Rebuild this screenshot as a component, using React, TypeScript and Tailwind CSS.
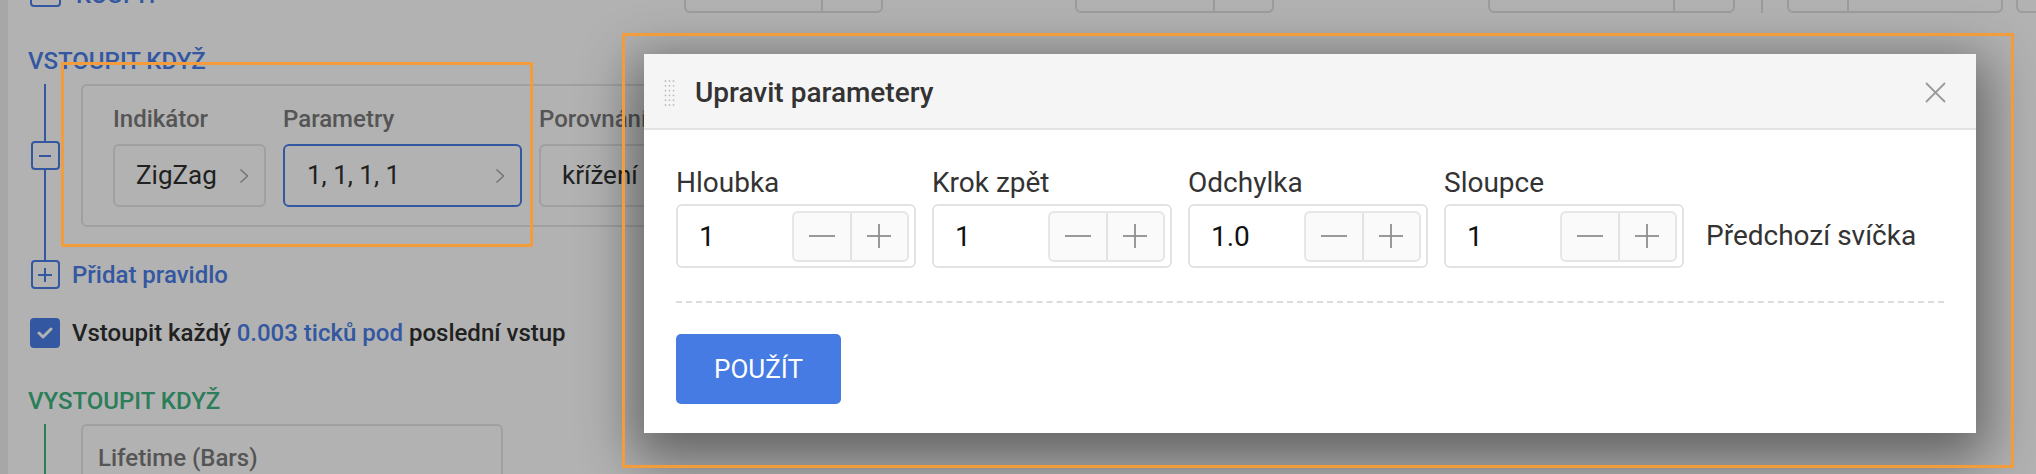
import React from "react";

function Chevron() {
  return (
    <svg width="10" height="16" viewBox="0 0 10 16" className="shrink-0">
      <polyline points="1.5,1.5 8.5,8 1.5,14.5" fill="none" stroke="#a8a8a8" strokeWidth="1.6" />
    </svg>
  );
}

function Stepper() {
  return (
    <div className="ml-auto w-[117px] h-[51px] shrink-0 border-2 border-[#e6e6e6] bg-[#fafafa] rounded-[6px] flex">
      <div className="flex-1 border-r-2 border-[#e3e3e3] flex items-center justify-center">
        <svg width="26" height="2" viewBox="0 0 26 2">
          <line x1="0" y1="1" x2="26" y2="1" stroke="#8e8e8e" strokeWidth="1.8" />
        </svg>
      </div>
      <div className="flex-1 flex items-center justify-center">
        <svg width="24" height="24" viewBox="0 0 24 24">
          <line x1="0" y1="12" x2="24" y2="12" stroke="#8e8e8e" strokeWidth="1.8" />
          <line x1="12" y1="0" x2="12" y2="24" stroke="#8e8e8e" strokeWidth="1.8" />
        </svg>
      </div>
    </div>
  );
}

function Field({ label, value }: { label: string; value: string }) {
  return (
    <div className="flex flex-col shrink-0">
      <div className="text-[28px] leading-[33px] text-[#333333]">{label}</div>
      <div className="mt-[5px] w-[240px] h-[64px] border-2 border-[#e3e3e3] rounded-[6px] flex items-center pl-[21px] pr-[5px]">
        <span className="text-[28px] leading-[33px] text-[#111111]">{value}</span>
        <Stepper />
      </div>
    </div>
  );
}

export default function App() {
  return (
    <div className="relative w-[2036px] h-[474px] overflow-hidden bg-white font-['Roboto',sans-serif]">
      {/* page behind the overlay */}
      <div className="flex h-full">
        <div className="w-[8px] h-full bg-[#f0f0f0] shrink-0" />
        <div className="flex-1 pl-[20px] flex flex-col">
          {/* top row (scrolled off) */}
          <div className="-mt-[40px] h-[53px] flex items-end shrink-0">
            <div className="ml-[2px] mb-[6px] w-[31px] h-[31px] shrink-0 border-2 border-[#4a7de6] rounded-[4px]" />
            <div className="ml-[15px] w-[120px] mb-[3px] shrink-0 text-[24px] leading-[30px] font-medium text-[#4a7de6]">KOUPIT</div>
            <div className="ml-[488px] w-[199px] h-[50px] shrink-0 border-2 border-[#e0e0e0] rounded-[6px] flex">
              <div className="w-[137px] border-r-2 border-[#e0e0e0]" />
            </div>
            <div className="ml-[192px] w-[199px] h-[50px] shrink-0 border-2 border-[#e0e0e0] rounded-[6px] flex">
              <div className="w-[138px] border-r-2 border-[#e0e0e0]" />
            </div>
            <div className="ml-[214px] w-[247px] h-[50px] shrink-0 border-2 border-[#e0e0e0] rounded-[6px] flex">
              <div className="w-[185px] border-r-2 border-[#e0e0e0]" />
            </div>
            <div className="ml-[26px] w-[2px] h-[40px] shrink-0 bg-[#e0e0e0]" />
            <div className="ml-[24px] w-[216px] h-[50px] shrink-0 border-2 border-[#e0e0e0] rounded-[6px] flex">
              <div className="w-[60px] border-r-2 border-[#e0e0e0]" />
            </div>
            <div className="ml-[13px] w-[120px] h-[50px] shrink-0 border-2 border-[#e0e0e0] rounded-[6px]" />
          </div>

          {/* VSTOUPIT KDYŽ */}
          <div className="mt-[33px] text-[24px] leading-[30px] font-medium text-[#4a7de6]">VSTOUPIT KDYŽ</div>

          <div className="mt-[8px] h-[143px] flex shrink-0">
            <div className="w-[34px] flex flex-col items-center shrink-0">
              <div className="flex-1 w-[2px] bg-[#4a7de6]" />
              <div className="w-[29px] h-[29px] border-2 border-[#4a7de6] rounded-[4px] flex items-center justify-center">
                <div className="w-[12px] h-[2px] bg-[#4a7de6]" />
              </div>
              <div className="flex-1 w-[2px] bg-[#4a7de6]" />
            </div>
            <div className="ml-[19px] w-[720px] shrink-0 border-2 border-[#e5e5e5] rounded-[6px] pt-[18px] pl-[30px] flex gap-[17px]">
              <div className="flex flex-col shrink-0">
                <div className="text-[24px] leading-[30px] font-medium text-[#7a7a7a]">Indikátor</div>
                <div className="mt-[10px] w-[153px] h-[63px] border-2 border-[#e5e5e5] rounded-[6px] flex items-center justify-between pl-[21px] pr-[15px]">
                  <span className="text-[26px] text-[#303030]">ZigZag</span>
                  <Chevron />
                </div>
              </div>
              <div className="flex flex-col shrink-0">
                <div className="text-[24px] leading-[30px] font-medium text-[#7a7a7a]">Parametry</div>
                <div className="mt-[10px] w-[239px] h-[63px] border-2 border-[#4a7de6] rounded-[6px] flex items-center justify-between pl-[22px] pr-[15px]">
                  <span className="text-[26px] text-[#303030]">1, 1, 1, 1</span>
                  <Chevron />
                </div>
              </div>
              <div className="flex flex-col shrink-0">
                <div className="text-[24px] leading-[30px] font-medium text-[#7a7a7a]">Porovnání</div>
                <div className="mt-[10px] w-[220px] h-[63px] border-2 border-[#e5e5e5] rounded-[6px] flex items-center justify-between pl-[21px] pr-[15px]">
                  <span className="text-[26px] text-[#303030]">křížení</span>
                  <Chevron />
                </div>
              </div>
            </div>
          </div>

          <div className="w-[34px] h-[33px] flex justify-center shrink-0">
            <div className="w-[2px] h-full bg-[#4a7de6]" />
          </div>

          <div className="h-[29px] flex items-center shrink-0">
            <div className="w-[34px] flex justify-center shrink-0">
              <div className="w-[29px] h-[29px] border-2 border-[#4a7de6] rounded-[4px] flex items-center justify-center">
                <svg width="14" height="14" viewBox="0 0 14 14">
                  <line x1="0" y1="7" x2="14" y2="7" stroke="#4a7de6" strokeWidth="2" />
                  <line x1="7" y1="0" x2="7" y2="14" stroke="#4a7de6" strokeWidth="2" />
                </svg>
              </div>
            </div>
            <span className="ml-[10px] text-[24px] leading-[30px] font-medium text-[#4a7de6]">Přidat pravidlo</span>
          </div>

          <div className="mt-[29px] h-[30px] flex items-center shrink-0">
            <div className="ml-[2px] w-[30px] h-[30px] rounded-[4px] bg-[#4a7de6] flex items-center justify-center shrink-0">
              <svg width="16" height="12" viewBox="0 0 16 12">
                <polyline points="2,6 6,10 14,2" fill="none" stroke="#ffffff" strokeWidth="3" strokeLinecap="round" strokeLinejoin="round" />
              </svg>
            </div>
            <span className="ml-[12px] text-[24px] leading-[30px] font-medium text-[#303030] whitespace-nowrap">
              Vstoupit každý <span className="text-[#4a7de6]">0.003 ticků pod</span> poslední vstup
            </span>
          </div>

          <div className="mt-[38px] text-[24px] leading-[30px] font-medium text-[#40b380]">VYSTOUPIT KDYŽ</div>

          <div className="mt-[8px] h-[100px] flex shrink-0">
            <div className="w-[34px] flex justify-center shrink-0">
              <div className="w-[2px] h-full bg-[#40b380]" />
            </div>
            <div className="ml-[19px] w-[422px] shrink-0 border-2 border-[#e5e5e5] rounded-[6px] pt-[17px] pl-[15px]">
              <div className="text-[24px] leading-[30px] font-medium text-[#7a7a7a]">Lifetime (Bars)</div>
            </div>
          </div>
        </div>
      </div>

      {/* overlay */}
      <div className="absolute inset-0 bg-black/30" />

      {/* modal */}
      <div className="absolute left-[644px] top-[54px] w-[1332px] h-[379px] bg-white flex flex-col shadow-[0_16px_50px_10px_rgba(0,0,0,0.45)]">
        <div className="h-[76px] shrink-0 bg-[#f5f5f5] border-b-2 border-[#e3e3e3] flex items-center pt-[3px] pl-[20px] pr-[30px]">
          <svg width="11" height="28" viewBox="0 0 11 28" className="shrink-0">
            {[0, 1, 2, 3, 4, 5].map((r) =>
              [0, 1, 2].map((c) => (
                <circle key={`${r}-${c}`} cx={1.5 + c * 4} cy={2 + r * 4.8} r="0.9" fill="#bdbdbd" />
              ))
            )}
          </svg>
          <span className="ml-[20px] text-[28px] leading-[33px] font-medium text-[#333333]">Upravit parametery</span>
          <svg width="21" height="21" viewBox="0 0 21 21" className="ml-auto shrink-0">
            <line x1="1" y1="1" x2="20" y2="20" stroke="#9a9a9a" strokeWidth="1.8" />
            <line x1="20" y1="1" x2="1" y2="20" stroke="#9a9a9a" strokeWidth="1.8" />
          </svg>
        </div>
        <div className="flex flex-col pt-[36px] pl-[32px] pr-[32px]">
          <div className="flex items-end gap-[16px]">
            <Field label="Hloubka" value="1" />
            <Field label="Krok zpět" value="1" />
            <Field label="Odchylka" value="1.0" />
            <Field label="Sloupce" value="1" />
            <div className="ml-[6px] h-[64px] flex items-center text-[28px] text-[#333333] whitespace-nowrap">Předchozí svíčka</div>
          </div>
          <div className="mt-[33px] border-t-2 border-dashed border-[#dcdcdc]" />
          <button className="mt-[31px] w-[165px] h-[70px] bg-[#457be3] rounded-[5px] text-white text-[26px] flex items-center justify-center">
            POUŽÍT
          </button>
        </div>
      </div>

      {/* annotation boxes */}
      <div className="absolute left-[61px] top-[62px] w-[472px] h-[185px] border-[3px] border-[#f39c3b]" />
      <div className="absolute left-[622px] top-[33px] w-[1392px] h-[435px] border-[3px] border-[#f39c3b]" />
    </div>
  );
}
